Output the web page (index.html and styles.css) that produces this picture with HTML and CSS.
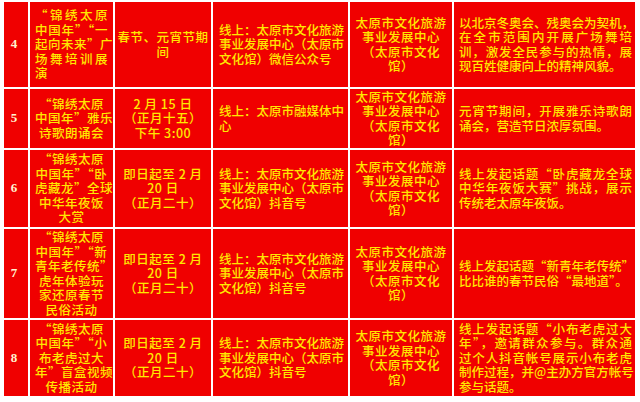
FILE: index.html
```html
<!DOCTYPE html>
<html lang="zh">
<head>
<meta charset="utf-8">
<link rel="stylesheet" href="styles.css">
</head>
<body>
<table class="grid">
  <colgroup>
    <col class="c1"><col class="c2"><col class="c3"><col class="c4"><col class="c5"><col class="c6">
  </colgroup>
  <tr class="r4">
    <td class="num">4</td>
    <td class="name"><span class="l j">“锦绣太原</span><span class="l j">中国年”“一</span><span class="l j">起向未来”广</span><span class="l j">场舞培训展</span><span class="l left">演</span></td>
    <td class="time"><span class="l">春节、元宵节期</span><span class="l">间</span></td>
    <td class="place"><span class="l j">线上：太原市文化旅游</span><span class="l j">事业发展中心（太原市</span><span class="l">文化馆）微信公众号</span></td>
    <td class="org"><span class="l">太原市文化旅游</span><span class="l">事业发展中心</span><span class="l">（太原市文化</span><span class="l">馆）</span></td>
    <td class="desc"><span class="l j">以北京冬奥会、残奥会为契机，</span><span class="l j">在全市范围内开展广场舞培</span><span class="l j">训，激发全民参与的热情，展</span><span class="l">现百姓健康向上的精神风貌。</span></td>
  </tr>
  <tr class="r5">
    <td class="num">5</td>
    <td class="name"><span class="l">“锦绣太原</span><span class="l">中国年”雅乐</span><span class="l">诗歌朗诵会</span></td>
    <td class="time"><span class="l">2 月 15 日</span><span class="l">（正月十五）</span><span class="l">下午 3:00</span></td>
    <td class="place"><span class="l j">线上：太原市融媒体中</span><span class="l">心</span></td>
    <td class="org"><span class="l">太原市文化旅游</span><span class="l">事业发展中心</span><span class="l">（太原市文化</span><span class="l">馆）</span></td>
    <td class="desc"><span class="l j">元宵节期间，开展雅乐诗歌朗</span><span class="l">诵会，营造节日浓厚氛围。</span></td>
  </tr>
  <tr class="r6">
    <td class="num">6</td>
    <td class="name"><span class="l">“锦绣太原</span><span class="l">中国年”“卧</span><span class="l">虎藏龙”全球</span><span class="l">中华年夜饭</span><span class="l">大赏</span></td>
    <td class="time"><span class="l">即日起至 2 月</span><span class="l">20 日</span><span class="l">（正月二十）</span></td>
    <td class="place"><span class="l j">线上：太原市文化旅游</span><span class="l j">事业发展中心（太原市</span><span class="l">文化馆）抖音号</span></td>
    <td class="org"><span class="l">太原市文化旅游</span><span class="l">事业发展中心</span><span class="l">（太原市文化</span><span class="l">馆）</span></td>
    <td class="desc"><span class="l j">线上发起话题“卧虎藏龙全球</span><span class="l j">中华年夜饭大赛”挑战，展示</span><span class="l">传统老太原年夜饭。</span></td>
  </tr>
  <tr class="r7">
    <td class="num">7</td>
    <td class="name"><span class="l">“锦绣太原</span><span class="l">中国年”“新</span><span class="l">青年老传统”</span><span class="l">虎年体验玩</span><span class="l">家还原春节</span><span class="l">民俗活动</span></td>
    <td class="time"><span class="l">即日起至 2 月</span><span class="l">20 日</span><span class="l">（正月二十）</span></td>
    <td class="place"><span class="l j">线上：太原市文化旅游</span><span class="l j">事业发展中心（太原市</span><span class="l">文化馆）抖音号</span></td>
    <td class="org"><span class="l">太原市文化旅游</span><span class="l">事业发展中心</span><span class="l">（太原市文化</span><span class="l">馆）</span></td>
    <td class="desc"><span class="l j">线上发起话题“新青年老传统”</span><span class="l">比比谁的春节民俗“最地道”。</span></td>
  </tr>
  <tr class="r8">
    <td class="num">8</td>
    <td class="name"><span class="l">“锦绣太原</span><span class="l">中国年”“小</span><span class="l">布老虎过大</span><span class="l">年”盲盒视频</span><span class="l">传播活动</span></td>
    <td class="time"><span class="l">即日起至 2 月</span><span class="l">20 日</span><span class="l">（正月二十）</span></td>
    <td class="place"><span class="l j">线上：太原市文化旅游</span><span class="l j">事业发展中心（太原市</span><span class="l">文化馆）抖音号</span></td>
    <td class="org"><span class="l">太原市文化旅游</span><span class="l">事业发展中心</span><span class="l">（太原市文化</span><span class="l">馆）</span></td>
    <td class="desc"><span class="l j">线上发起话题“小布老虎过大</span><span class="l j">年”，邀请群众参与。群众通</span><span class="l j">过个人抖音帐号展示小布老虎</span><span class="l j">制作过程，并@主办方官方帐号</span><span class="l">参与话题。</span></td>
  </tr>
</table>
</body>
</html>
```

FILE: styles.css
```css
html, body {
  margin: 0;
  padding: 0;
  background: #ffffff;
}
body {
  width: 640px;
  height: 402px;
  overflow: hidden;
}
.grid {
  margin: 0 0 0 2px;
  border-collapse: separate;
  border-spacing: 2px;
  table-layout: fixed;
  width: 635px;
  font-family: "Noto Sans CJK SC", "Liberation Serif", sans-serif;
  font-size: 12.5px;
  line-height: 14.5px;
  font-weight: 500;
  color: #ffe800;
}
.c1 { width: 24px; }
.c2 { width: 83px; }
.c3 { width: 96px; }
.c4 { width: 135px; }
.c5 { width: 102px; }
.c6 { width: 181px; }
.grid td {
  background: #f00000;
  padding: 0;
  vertical-align: middle;
  text-align: center;
  overflow: hidden;
}
.r4 { height: 85px; }
.r5 { height: 59px; }
.r6 { height: 77px; }
.r7 { height: 89px; }
.r8 { height: 76px; }
.l {
  display: block;
  white-space: nowrap;
}
.j {
  text-align: justify;
  text-align-last: justify;
}
.left {
  text-align: left;
}
.grid td.num {
  color: #fff4d0;
  font-family: "Liberation Serif", serif;
  font-size: 13px;
  font-weight: 700;
  padding-right: 4px;
}
.grid td.name {
  padding: 0 5px;
}
.name .l {
  letter-spacing: 0.5px;
}
.time .l {
  letter-spacing: 0.5px;
}
.grid td.place {
  padding: 0 4px 0 6px;
  text-align: left;
}
.org .l {
  letter-spacing: 0.5px;
}
.grid td.desc {
  padding: 0 3px 0 5px;
  text-align: left;
}
```
